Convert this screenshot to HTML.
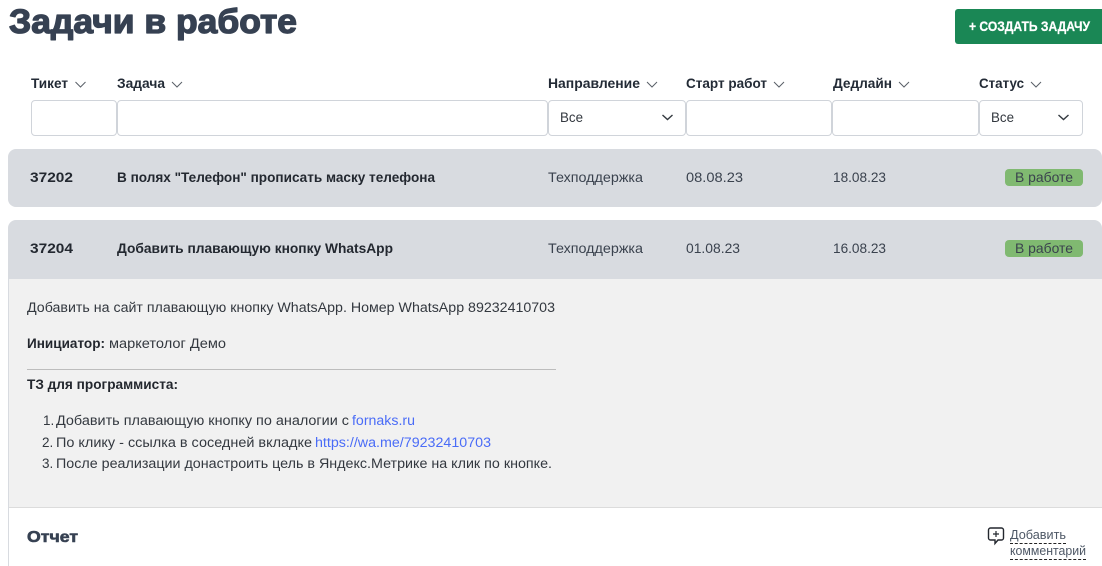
<!DOCTYPE html>
<html lang="ru"><head><meta charset="utf-8"><title>Задачи в работе</title>
<style>
html,body{margin:0;padding:0;background:#fff;width:1102px;height:566px;overflow:hidden}
.b{position:absolute;box-sizing:border-box}
.in{top:100px;height:36px;border:1px solid #d0d4da;border-radius:4px;background:#fff}
svg.t{position:absolute;left:0;top:0}
text{font-family:"Liberation Sans",sans-serif;font-size:14px;fill:#2b3038}
.h{font-weight:700;font-size:13.5px;fill:#232b36}
.m{font-weight:700;font-size:13.5px;fill:#232830}
.r{fill:#3a424e;font-size:14px}
.x{fill:#33383f;font-size:13.5px}
.k{font-weight:700;fill:#23272e;font-size:13.5px}
.l{fill:#4a6cf7;font-size:13.5px}
</style></head><body>
<div class="b" style="left:955px;top:9px;width:147px;height:35px;background:#1a8755;border-radius:3px 0 0 3px"></div>
<div class="b in" style="left:31px;width:86px"></div>
<div class="b in" style="left:117px;width:431px"></div>
<div class="b in" style="left:548px;width:138px"></div>
<div class="b in" style="left:686px;width:146px"></div>
<div class="b in" style="left:832px;width:147px"></div>
<div class="b in" style="left:979px;width:104px"></div>
<div class="b" style="left:8px;top:149px;width:1094px;height:58px;background:#d8dbe0;border-radius:8px"></div>
<div class="b" style="left:8px;top:220px;width:1094px;height:59px;background:#d8dbe0;border-radius:8px 8px 0 0"></div>
<div class="b" style="left:8px;top:279px;width:1094px;height:229px;background:#f1f1f1;border-bottom:1px solid #dcdcdc"></div>
<div class="b" style="left:8px;top:279px;width:1px;height:287px;background:#d8dbe0"></div>
<div class="b" style="left:27px;top:369px;width:529px;height:1px;background:#bdbdbd"></div>
<div class="b" style="left:1005px;top:169px;width:78px;height:17px;background:#80b971;border-radius:4px"></div>
<div class="b" style="left:1005px;top:240px;width:78px;height:17px;background:#80b971;border-radius:4px"></div>
<div class="b" style="left:1010px;top:543px;width:56px;border-top:1px dashed #222"></div>
<div class="b" style="left:1010px;top:559px;width:76px;border-top:1px dashed #222"></div>
<svg class="t" width="1102" height="566" viewBox="0 0 1102 566" xmlns="http://www.w3.org/2000/svg">
<text x="9" y="33" textLength="288" lengthAdjust="spacingAndGlyphs" style="font-weight:700;font-size:34px;fill:#364152;stroke:#364152;stroke-width:1.3;stroke-linejoin:round">Задачи в работе</text>
<text x="969" y="31" textLength="121" lengthAdjust="spacingAndGlyphs" style="font-weight:700;font-size:13.5px;fill:#fff;stroke:#fff;stroke-width:.25">+ СОЗДАТЬ ЗАДАЧУ</text>

<text class="h" x="31" y="88" textLength="37" lengthAdjust="spacingAndGlyphs">Тикет</text>
<text class="h" x="117" y="88" textLength="48" lengthAdjust="spacingAndGlyphs">Задача</text>
<text class="h" x="548" y="88" textLength="92" lengthAdjust="spacingAndGlyphs">Направление</text>
<text class="h" x="686" y="88" textLength="81" lengthAdjust="spacingAndGlyphs">Старт работ</text>
<text class="h" x="833" y="88" textLength="59" lengthAdjust="spacingAndGlyphs">Дедлайн</text>
<text class="h" x="979" y="88" textLength="45" lengthAdjust="spacingAndGlyphs">Статус</text>
<g fill="none" stroke="#5a6068" stroke-width="1">
<path d="M75.500 82l5 5 5-5"/><path d="M172 82l5 5 5-5"/><path d="M647 82l5 5 5-5"/><path d="M774 82l5 5 5-5"/><path d="M899 82l5 5 5-5"/><path d="M1031 82l5 5 5-5"/>
</g>
<g fill="none" stroke="#343a40" stroke-width="1.4">
<path d="M662.500 115l5 4.500 5-4.500"/><path d="M1058.500 115l5 4.500 5-4.500"/>
</g>
<text class="x" x="560" y="122" textLength="23" lengthAdjust="spacingAndGlyphs">Все</text>
<text class="x" x="991" y="122" textLength="23" lengthAdjust="spacingAndGlyphs">Все</text>

<text class="m" x="30" y="182" textLength="43" lengthAdjust="spacingAndGlyphs">37202</text>
<text class="m" x="117" y="182" textLength="318" lengthAdjust="spacingAndGlyphs">В полях "Телефон" прописать маску телефона</text>
<text class="r" x="548" y="182" textLength="95" lengthAdjust="spacingAndGlyphs">Техподдержка</text>
<text class="r" x="686" y="182" textLength="57" lengthAdjust="spacingAndGlyphs">08.08.23</text>
<text class="r" x="833" y="182" textLength="53" lengthAdjust="spacingAndGlyphs">18.08.23</text>
<text class="r" x="1015" y="182" textLength="58" lengthAdjust="spacingAndGlyphs">В работе</text>

<text class="m" x="30" y="253" textLength="43" lengthAdjust="spacingAndGlyphs">37204</text>
<text class="m" x="117" y="253" textLength="276" lengthAdjust="spacingAndGlyphs">Добавить плавающую кнопку WhatsApp</text>
<text class="r" x="548" y="253" textLength="95" lengthAdjust="spacingAndGlyphs">Техподдержка</text>
<text class="r" x="686" y="253" textLength="54" lengthAdjust="spacingAndGlyphs">01.08.23</text>
<text class="r" x="833" y="253" textLength="53" lengthAdjust="spacingAndGlyphs">16.08.23</text>
<text class="r" x="1015" y="253" textLength="58" lengthAdjust="spacingAndGlyphs">В работе</text>

<text class="x" x="27" y="312" textLength="528" lengthAdjust="spacingAndGlyphs">Добавить на сайт плавающую кнопку WhatsApp. Номер WhatsApp 89232410703</text>
<text class="k" x="27" y="348" textLength="78" lengthAdjust="spacingAndGlyphs">Инициатор:</text>
<text class="x" x="109" y="348" textLength="117" lengthAdjust="spacingAndGlyphs">маркетолог Демо</text>
<text class="k" x="27" y="389" textLength="151" lengthAdjust="spacingAndGlyphs">ТЗ для программиста:</text>

<text class="x" x="43" y="425">1.</text>
<text class="x" x="56" y="425" textLength="293" lengthAdjust="spacingAndGlyphs">Добавить плавающую кнопку по аналогии с</text>
<text class="l" x="352" y="425" textLength="63" lengthAdjust="spacingAndGlyphs">fornaks.ru</text>
<text class="x" x="42" y="447">2.</text>
<text class="x" x="56" y="447" textLength="256" lengthAdjust="spacingAndGlyphs">По клику - ссылка в соседней вкладке</text>
<text class="l" x="315" y="447" textLength="176" lengthAdjust="spacingAndGlyphs">https://wa.me/79232410703</text>
<text class="x" x="42" y="468">3.</text>
<text class="x" x="56" y="468" textLength="496" lengthAdjust="spacingAndGlyphs">После реализации донастроить цель в Яндекс.Метрике на клик по кнопке.</text>

<text x="27" y="542" textLength="51" lengthAdjust="spacingAndGlyphs" style="font-weight:700;font-size:16px;fill:#364152;stroke:#364152;stroke-width:.6;stroke-linejoin:round">Отчет</text>

<g fill="none" stroke="#23272e" stroke-width="1.4">
<path d="M990.500 528h11a2 2 0 0 1 2 2v8a2 2 0 0 1-2 2h-3.500l-3 3.500v-3.500h-4.500a2 2 0 0 1-2-2v-8a2 2 0 0 1 2-2z"/>
<path d="M996 531v6M993 534h6" stroke-width="1.200"/>
</g>
<text x="1010" y="539" textLength="56" lengthAdjust="spacingAndGlyphs" style="font-size:13px;fill:#4e5866">Добавить</text>
<text x="1010" y="555" textLength="76" lengthAdjust="spacingAndGlyphs" style="font-size:13px;fill:#4e5866">комментарий</text>
</svg>
</body></html>
